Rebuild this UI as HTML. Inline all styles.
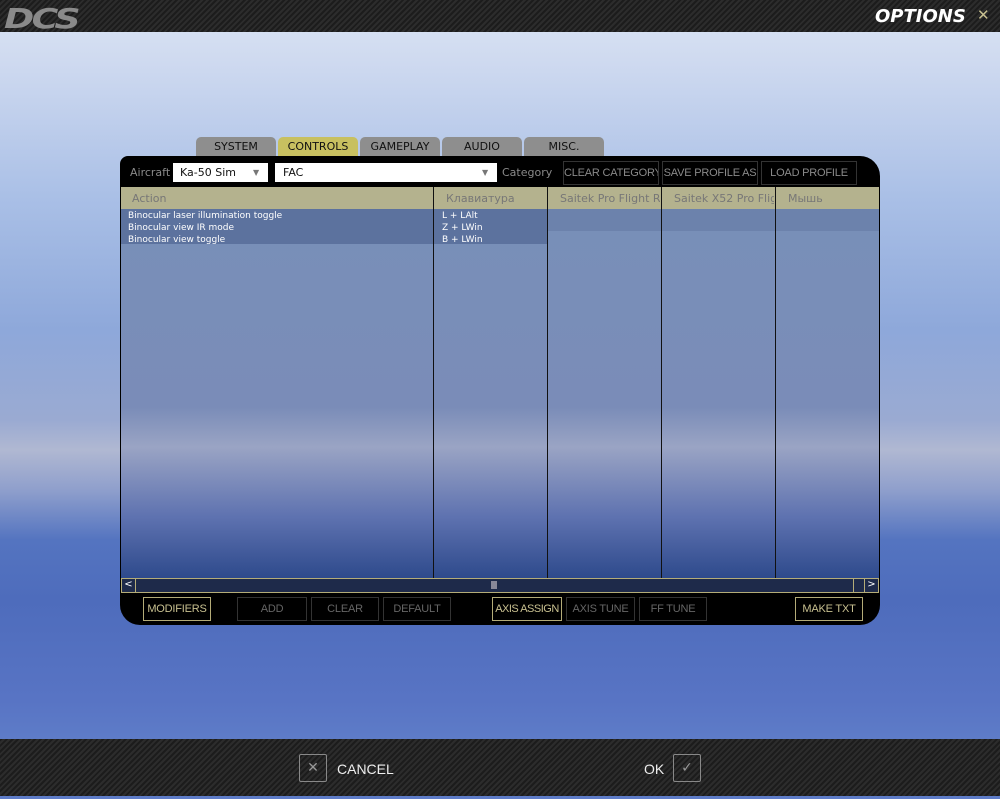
<!DOCTYPE html>
<html><head><meta charset="utf-8"><style>
*{margin:0;padding:0;box-sizing:border-box}
body{width:1000px;height:799px;overflow:hidden;font-family:"DejaVu Sans","Liberation Sans",sans-serif;position:relative;
background:linear-gradient(180deg,#dce6f4 0px,#cfdaf0 60px,#a9bfe6 200px,#8ea8da 330px,#9aaad2 420px,#b0b8d2 450px,#8f9fcc 490px,#5474c0 540px,#4e6cbc 600px,#5874c4 700px,#5e7cc8 740px)}
.bar{position:absolute;left:0;width:1000px;background:repeating-linear-gradient(135deg,#1c1c1c 0 2px,#2c2c2c 2px 4px)}
.t{position:absolute;font-size:11px;white-space:nowrap}
.tab{position:absolute;top:137px;height:20px;width:80px;background:#8e8e8e;border-radius:5px 5px 0 0;font-size:11px;color:#111;text-align:center;line-height:20px}
.btn{position:absolute;height:24px;border:1px solid #333;color:#666;font-size:11px;font-family:"Liberation Sans",sans-serif;text-align:center;line-height:22px;white-space:nowrap;overflow:hidden;letter-spacing:-0.2px}
.btn.on{border-color:#b4ac78;color:#c8c090}
.col{position:absolute;top:187px;height:391px;width:1px;background:#111}
</style></head><body>
<div class="bar" style="top:0;height:32px"></div>
<div class="t" style="left:4px;top:2px;font-size:28px;font-weight:bold;font-style:italic;color:#8a8a8a;letter-spacing:-2px;transform:scaleX(1.3);transform-origin:left">DCS</div>
<div class="t" style="left:875px;top:6px;font-size:18px;font-weight:bold;font-style:italic;color:#fff">OPTIONS</div>
<div class="t" style="left:977px;top:6px;font-size:15px;color:#c8c090">✕</div>

<div class="tab" style="left:196px">SYSTEM</div>
<div class="tab" style="left:278px;background:#c8c060">CONTROLS</div>
<div class="tab" style="left:360px">GAMEPLAY</div>
<div class="tab" style="left:442px">AUDIO</div>
<div class="tab" style="left:524px">MISC.</div>

<div style="position:absolute;left:120px;top:156px;width:760px;height:469px;background:#000;border-radius:8px 20px 20px 20px"></div>
<div class="t" style="left:130px;top:166px;color:#8a8a8a">Aircraft</div>
<div style="position:absolute;left:173px;top:163px;width:95px;height:19px;background:#fff"></div>
<div class="t" style="left:180px;top:166px;color:#111">Ka-50 Sim</div>
<div class="t" style="left:253px;top:168px;color:#777;font-size:8px">▼</div>
<div style="position:absolute;left:275px;top:163px;width:222px;height:19px;background:#fff"></div>
<div class="t" style="left:283px;top:166px;color:#111">FAC</div>
<div class="t" style="left:482px;top:168px;color:#777;font-size:8px">▼</div>
<div class="t" style="left:502px;top:166px;color:#8a8a8a">Category</div>
<div class="btn" style="left:563px;top:161px;width:96px;color:#8a8a8a">CLEAR CATEGORY</div>
<div class="btn" style="left:662px;top:161px;width:96px;color:#8a8a8a">SAVE PROFILE AS</div>
<div class="btn" style="left:761px;top:161px;width:96px;color:#8a8a8a">LOAD PROFILE</div>

<div style="position:absolute;left:121px;top:187px;width:758px;height:391px;background:linear-gradient(180deg,#7890b8,#7a8cb8 220px,#9aa4c4 260px,#5e72b0 330px,#2e4a8c 391px)"></div>
<div style="position:absolute;left:121px;top:187px;width:758px;height:22px;background:#b4b28e"></div>
<div style="position:absolute;left:121px;top:209px;width:426px;height:35px;background:rgba(40,60,110,.35)"></div>
<div style="position:absolute;left:547px;top:209px;width:332px;height:22px;background:rgba(40,60,110,.15)"></div>
<div class="col" style="left:433px"></div><div class="col" style="left:547px"></div><div class="col" style="left:661px"></div><div class="col" style="left:775px"></div>
<div class="t" style="left:132px;top:192px;color:#777">Action</div>
<div class="t" style="left:446px;top:192px;color:#777">Клавиатура</div>
<div class="t" style="left:560px;top:192px;color:#777;width:100px;overflow:hidden">Saitek Pro Flight Rudder</div>
<div class="t" style="left:674px;top:192px;color:#777;width:100px;overflow:hidden">Saitek X52 Pro Flight</div>
<div class="t" style="left:788px;top:192px;color:#777">Мышь</div>
<div class="t" style="left:128px;top:210px;color:#fff;font-size:9px;line-height:12px">Binocular laser illumination toggle<br>Binocular view IR mode<br>Binocular view toggle</div>
<div class="t" style="left:442px;top:210px;color:#fff;font-size:9px;line-height:12px">L + LAlt<br>Z + LWin<br>B + LWin</div>

<div style="position:absolute;left:121px;top:578px;width:758px;height:15px;background:#1e2a4a;border:1px solid #b4ac78"></div>
<div style="position:absolute;left:121px;top:578px;width:15px;height:15px;border:1px solid #b4ac78;color:#fff;font-size:10px;text-align:center;line-height:12px">&lt;</div>
<div style="position:absolute;left:864px;top:578px;width:15px;height:15px;border:1px solid #b4ac78;color:#fff;font-size:10px;text-align:center;line-height:12px">&gt;</div>
<div style="position:absolute;left:853px;top:578px;width:1px;height:15px;background:#b4ac78"></div>
<div style="position:absolute;left:491px;top:581px;width:6px;height:8px;background:#889"></div>

<div class="btn on" style="left:143px;top:597px;width:68px">MODIFIERS</div>
<div class="btn" style="left:237px;top:597px;width:70px">ADD</div>
<div class="btn" style="left:311px;top:597px;width:68px">CLEAR</div>
<div class="btn" style="left:383px;top:597px;width:68px">DEFAULT</div>
<div class="btn on" style="left:492px;top:597px;width:70px;letter-spacing:-0.5px">AXIS ASSIGN</div>
<div class="btn" style="left:566px;top:597px;width:69px">AXIS TUNE</div>
<div class="btn" style="left:639px;top:597px;width:68px">FF TUNE</div>
<div class="btn on" style="left:795px;top:597px;width:68px">MAKE TXT</div>

<div class="bar" style="top:739px;height:57px"></div>
<div style="position:absolute;left:299px;top:754px;width:28px;height:28px;border:1px solid #888;border-radius:2px;color:#999;text-align:center;line-height:26px;font-size:14px">✕</div>
<div class="t" style="left:337px;top:761px;color:#eee;font-size:14px;font-family:'Liberation Sans',sans-serif">CANCEL</div>
<div class="t" style="left:644px;top:761px;color:#eee;font-size:14px;font-family:'Liberation Sans',sans-serif">OK</div>
<div style="position:absolute;left:673px;top:754px;width:28px;height:28px;border:1px solid #888;border-radius:2px;color:#999;text-align:center;line-height:26px;font-size:14px">✓</div>
</body></html>
